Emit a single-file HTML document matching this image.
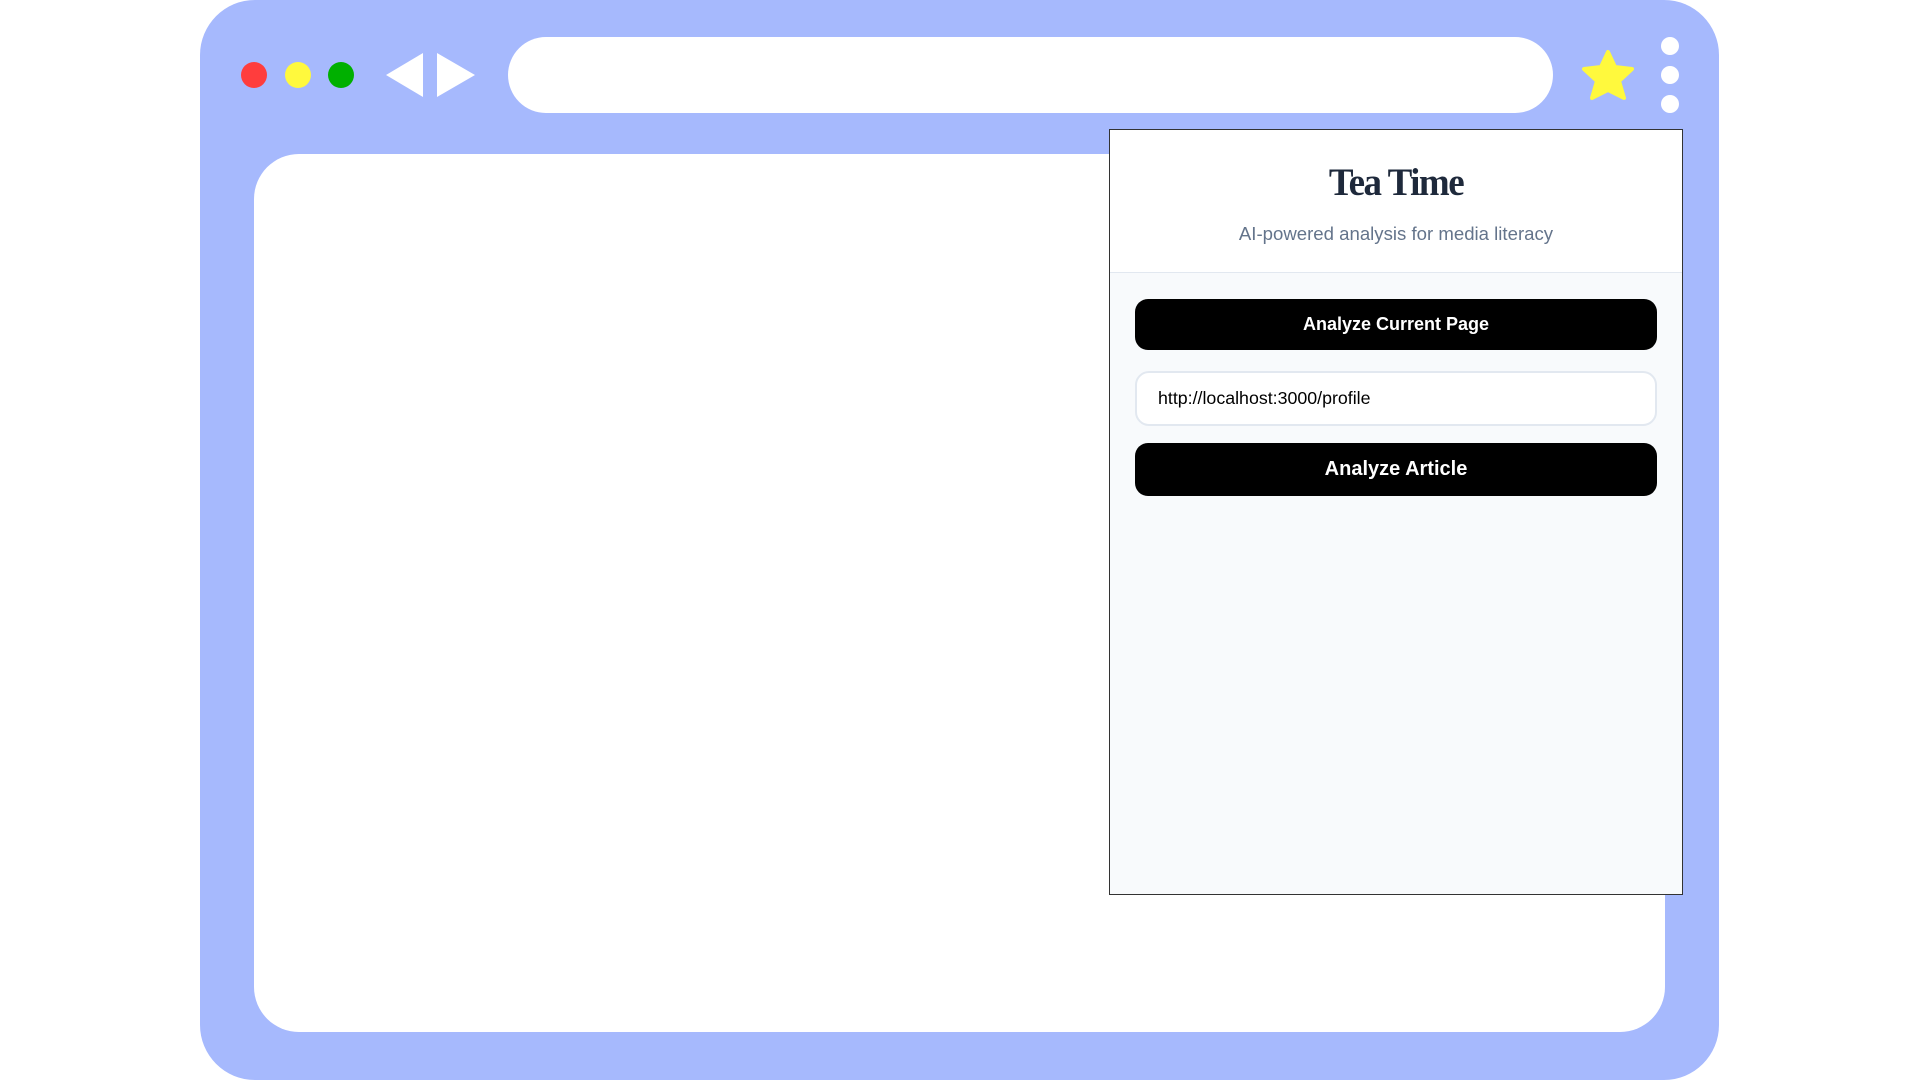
<!DOCTYPE html>
<html><head><style>
*{margin:0;padding:0;box-sizing:border-box}
body{width:1920px;height:1080px;background:#fff;position:relative;overflow:hidden;font-family:"Liberation Sans",sans-serif}
.frame{position:absolute;left:200px;top:0;width:1519px;height:1080px;background:#a6b9fd;border-radius:55px}
.dot{position:absolute;width:26px;height:26px;border-radius:50%}
.url{position:absolute;left:508px;top:37px;width:1045px;height:76px;background:#fff;border-radius:38px}
.content{position:absolute;left:254px;top:154px;width:1411px;height:878px;background:#fff;border-radius:45px}
.mdot{position:absolute;left:1661px;width:18px;height:18px;border-radius:50%;background:#fff}
.popup{position:absolute;left:1109px;top:129px;width:574px;height:766px;background:#f8fafc;border:1px solid #333}
.head{height:143px;background:#fff;border-bottom:1px solid #e2e8f0;text-align:center}
.title{padding-top:31px;font-family:"Liberation Serif",serif;font-weight:bold;font-size:37px;color:#1e293b;height:93px;letter-spacing:-1.5px;transform:scaleY(1.05)}
.sub{font-size:18.6px;color:#64748b}
.btn{position:absolute;left:25px;width:522px;background:#000;color:#fff;font-weight:bold;text-align:center;border-radius:13px}
.inp{position:absolute;left:25px;top:241px;width:522px;height:55px;background:#fff;border:2px solid #e2e8f0;border-radius:14px;font-size:17.8px;padding-left:21px;line-height:51px;color:#000}
</style></head><body>
<div class="frame"></div>
<div class="dot" style="left:241px;top:62px;background:#ff3d3d"></div>
<div class="dot" style="left:285px;top:62px;background:#fff93d"></div>
<div class="dot" style="left:328px;top:62px;background:#00b000"></div>
<svg style="position:absolute;left:0;top:0" width="1920" height="160">
<polygon points="386,75 423,53 423,97" fill="#fff"/>
<polygon points="437,53 437,97 475,75" fill="#fff"/>
<polygon points="1608,52 1615,67 1632,69 1619,81 1624,98 1608,90 1592,98 1597,81 1584,69 1601,67" fill="#fff93d" stroke="#fff93d" stroke-width="4" stroke-linejoin="round"/>
</svg>
<div class="url"></div>
<div class="mdot" style="top:37px"></div>
<div class="mdot" style="top:66px"></div>
<div class="mdot" style="top:95px"></div>
<div class="content"></div>
<div class="popup">
<div class="head"><div class="title">Tea Time</div><div class="sub">AI-powered analysis for media literacy</div></div>
<div class="btn" style="top:169px;height:51px;line-height:51px;font-size:18px">Analyze Current Page</div>
<div class="inp">http://localhost:3000/profile</div>
<div class="btn" style="top:313px;height:53px;line-height:53px;font-size:20px">Analyze Article</div>
</div>
</body></html>
